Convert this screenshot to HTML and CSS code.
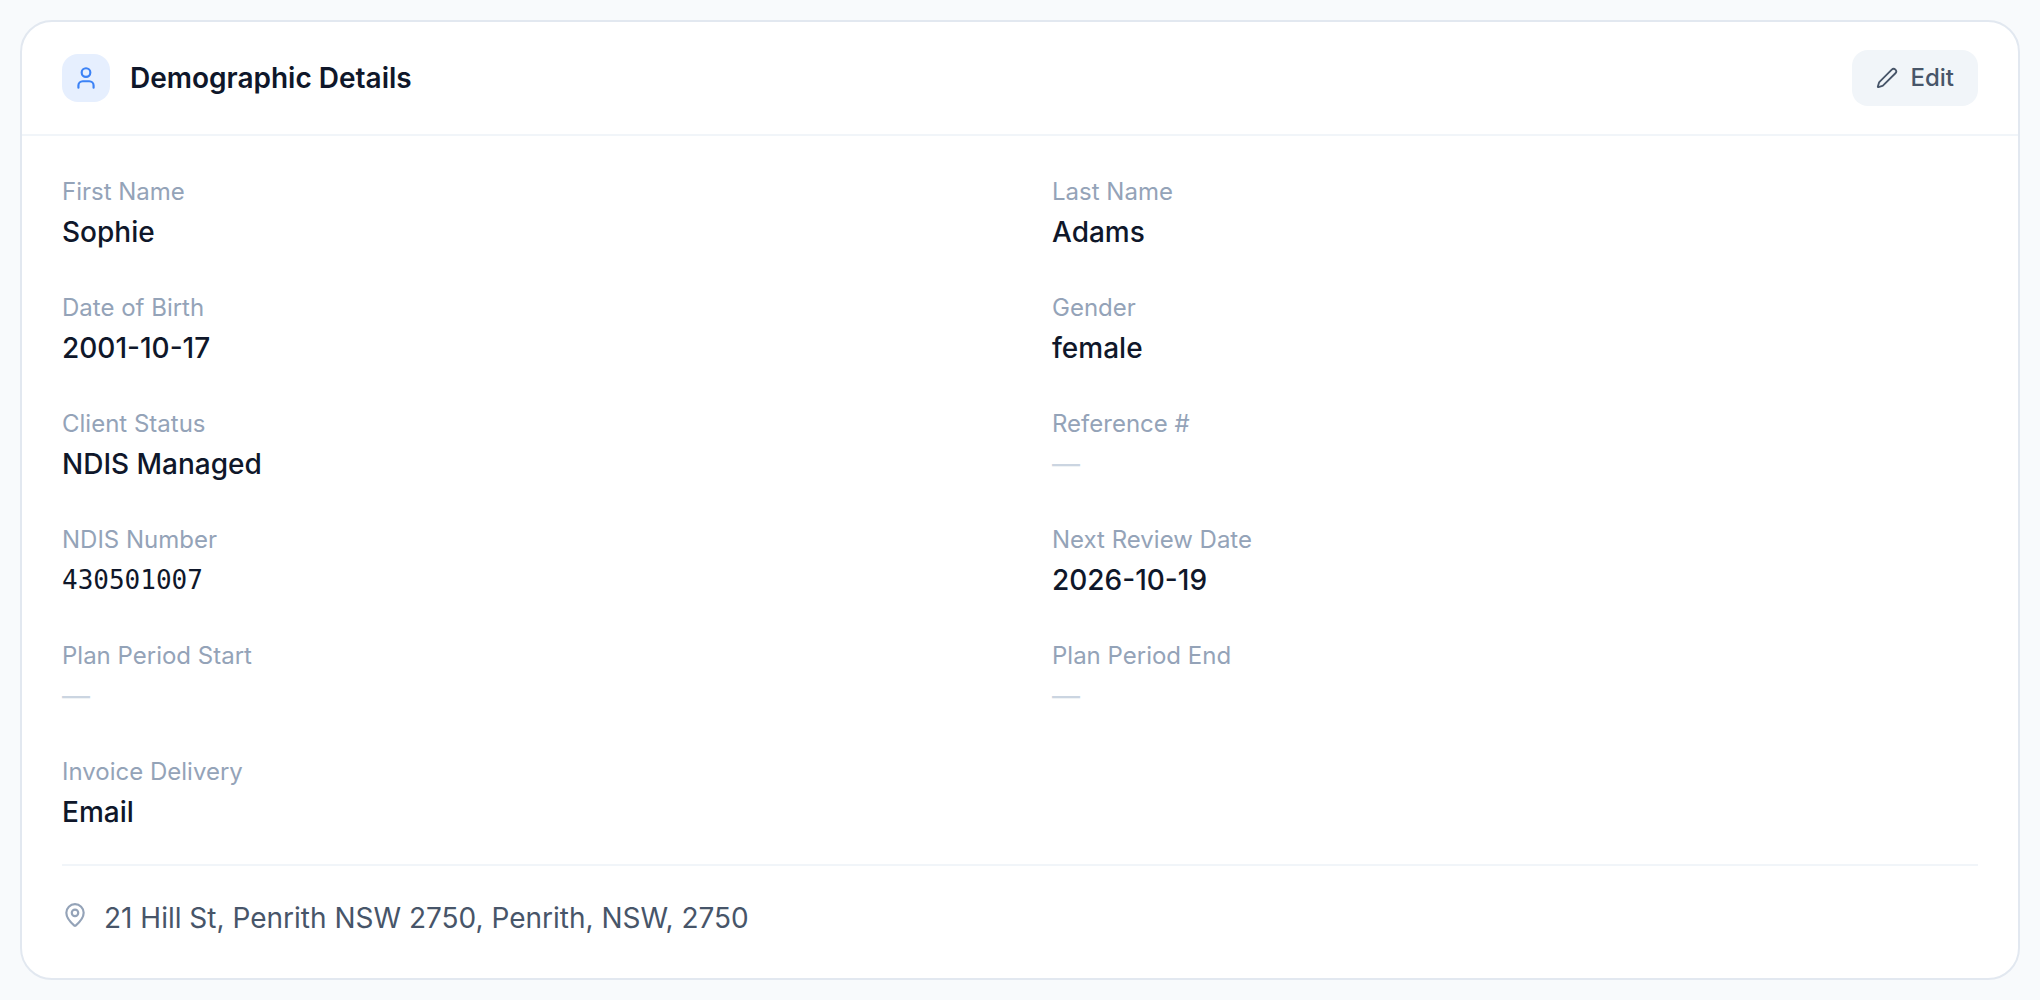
FILE: index.html
```html
<!DOCTYPE html>
<html lang="en">
<head>
    <title>Demographic Details</title>
    <meta charset="UTF-8">
    <meta name="viewport" content="width=device-width, initial-scale=1.0">
    <link rel="stylesheet" href="styles.css">
</head>
<body>
    <section class="card">
        <header class="card-header">
            <div class="card-title">
                <span class="title-icon">
                    <svg viewBox="0 0 24 24" width="26" height="26" aria-hidden="true">
                        <circle cx="12" cy="7" r="4"></circle>
                        <path d="M19 21v-2a4 4 0 0 0-4-4H9a4 4 0 0 0-4 4v2"></path>
                    </svg>
                </span>
                <h2>Demographic Details</h2>
            </div>
            <button type="button" class="edit-btn">
                <svg viewBox="0 0 24 24" width="22" height="22" aria-hidden="true">
                    <path d="M21.17 6.81a1 1 0 0 0-3.98-3.98L3.84 16.17a2 2 0 0 0-.5.83l-1.32 4.35a.5.5 0 0 0 .62.62l4.35-1.32a2 2 0 0 0 .83-.5z"></path>
                </svg>
                Edit
            </button>
        </header>

        <div class="card-body">
            <dl class="details">
                <div class="field">
                    <dt>First Name</dt>
                    <dd>Sophie</dd>
                </div>
                <div class="field">
                    <dt>Last Name</dt>
                    <dd>Adams</dd>
                </div>
                <div class="field">
                    <dt>Date of Birth</dt>
                    <dd>2001-10-17</dd>
                </div>
                <div class="field">
                    <dt>Gender</dt>
                    <dd>female</dd>
                </div>
                <div class="field">
                    <dt>Client Status</dt>
                    <dd>NDIS Managed</dd>
                </div>
                <div class="field">
                    <dt>Reference #</dt>
                    <dd class="empty">—</dd>
                </div>
                <div class="field">
                    <dt>NDIS Number</dt>
                    <dd class="mono">430501007</dd>
                </div>
                <div class="field">
                    <dt>Next Review Date</dt>
                    <dd>2026-10-19</dd>
                </div>
                <div class="field">
                    <dt>Plan Period Start</dt>
                    <dd class="empty">—</dd>
                </div>
                <div class="field">
                    <dt>Plan Period End</dt>
                    <dd class="empty">—</dd>
                </div>
                <div class="field">
                    <dt>Invoice Delivery</dt>
                    <dd>Email</dd>
                </div>
            </dl>

            <div class="address">
                <svg viewBox="0 0 24 24" width="26" height="26" aria-hidden="true">
                    <path d="M20 10c0 5-5.5 10.2-7.4 11.8a1 1 0 0 1-1.2 0C9.5 20.2 4 15 4 10a8 8 0 0 1 16 0"></path>
                    <circle cx="12" cy="10" r="3"></circle>
                </svg>
                <span>21 Hill St, Penrith NSW 2750, Penrith, NSW, 2750</span>
            </div>
        </div>
    </section>
</body>
</html>
```
FILE: styles.css
```css
body {
    margin: 0;
    padding: 20px;
    font-family: Inter, "Liberation Sans", sans-serif;
    font-size: 28px;
    line-height: 40px;
    color: #0f172a;
    background-color: #f8fafc;
}

svg {
    flex-shrink: 0;
    fill: none;
    stroke: currentColor;
    stroke-width: 2;
    stroke-linecap: round;
    stroke-linejoin: round;
}

.card {
    background-color: #fff;
    border: 2px solid #e2e8f0;
    border-radius: 32px;
}

.card-header {
    display: flex;
    justify-content: space-between;
    align-items: center;
    padding: 28px 40px;
    border-bottom: 2px solid #f1f5f9;
}

.card-title {
    display: flex;
    align-items: center;
    gap: 20px;
}

.card-title h2 {
    margin: 0;
    font-size: 28px;
    font-weight: 600;
}

.title-icon {
    display: flex;
    align-items: center;
    justify-content: center;
    width: 48px;
    height: 48px;
    border-radius: 16px;
    color: #3b82f6;
    background-color: #e6effe;
}

.edit-btn {
    display: flex;
    align-items: center;
    gap: 12px;
    padding: 12px 24px;
    border: none;
    border-radius: 16px;
    font-family: inherit;
    font-size: 24px;
    font-weight: 500;
    line-height: 32px;
    color: #475569;
    background-color: #f1f5f9;
    cursor: pointer;
}

.edit-btn:hover {
    background-color: #e2e8f0;
}

.card-body {
    padding: 40px;
}

.details {
    display: grid;
    grid-template-columns: 1fr 1fr;
    gap: 40px 64px;
    margin: 0;
}

.field dt {
    margin-bottom: 4px;
    font-size: 24px;
    line-height: 32px;
    color: #94a3b8;
}

.field dd {
    margin: 0;
    font-weight: 500;
}

.field .empty {
    font-weight: 400;
    color: #cbd5e1;
}

.field .mono {
    font-family: "DejaVu Sans Mono", monospace;
    font-size: 26px;
    font-weight: 400;
}

.address {
    display: flex;
    align-items: flex-start;
    gap: 16px;
    margin-top: 32px;
    padding-top: 32px;
    border-top: 2px solid #f1f5f9;
    color: #475569;
}

.address svg {
    margin-top: 4px;
    color: #94a3b8;
}
```
